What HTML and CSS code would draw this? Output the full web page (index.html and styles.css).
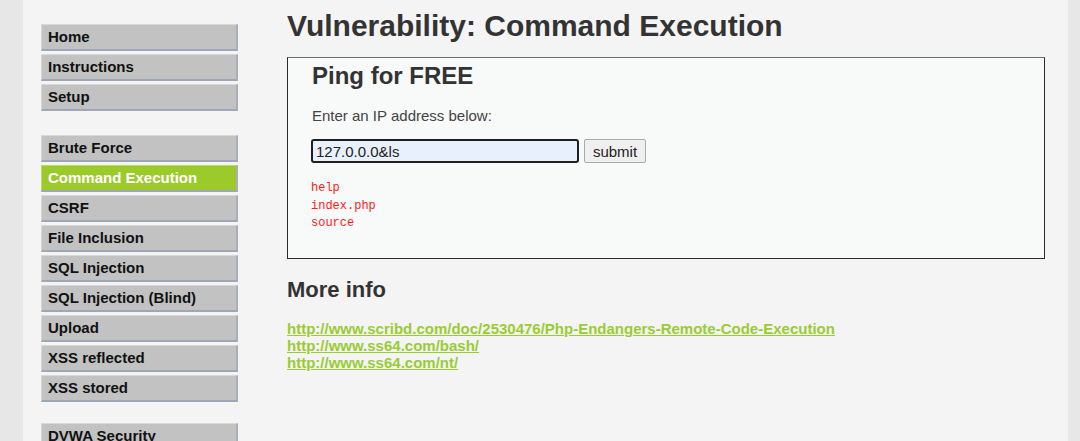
FILE: index.html
```html
<!DOCTYPE html>
<html>
<head>
<meta charset="utf-8">
<link rel="stylesheet" href="styles.css">
</head>
<body>
<div class="page">
  <nav class="menu">
    <ul class="group">
      <li><a class="item">Home</a></li>
      <li><a class="item">Instructions</a></li>
      <li><a class="item">Setup</a></li>
    </ul>
    <ul class="group">
      <li><a class="item">Brute Force</a></li>
      <li><a class="item selected">Command Execution</a></li>
      <li><a class="item">CSRF</a></li>
      <li><a class="item">File Inclusion</a></li>
      <li><a class="item">SQL Injection</a></li>
      <li><a class="item">SQL Injection (Blind)</a></li>
      <li><a class="item">Upload</a></li>
      <li><a class="item">XSS reflected</a></li>
      <li><a class="item">XSS stored</a></li>
    </ul>
    <ul class="group">
      <li><a class="item">DVWA Security</a></li>
    </ul>
  </nav>
  <main class="body">
    <h1 class="title">Vulnerability: Command Execution</h1>
    <div class="vulnerable">
      <h2 class="sub">Ping for FREE</h2>
      <p class="label">Enter an IP address below:</p>
      <form class="form">
        <input class="ip" type="text" value="127.0.0.0&amp;ls">
        <button class="btn" type="button">submit</button>
      </form>
      <pre class="output">help
index.php
source</pre>
    </div>
    <h2 class="more">More info</h2>
    <ul class="links">
      <li><a class="link">http://www.scribd.com/doc/2530476/Php-Endangers-Remote-Code-Execution</a></li>
      <li><a class="link">http://www.ss64.com/bash/</a></li>
      <li><a class="link">http://www.ss64.com/nt/</a></li>
    </ul>
  </main>
</div>
</body>
</html>
```
FILE: styles.css
```css
html, body {
  margin: 0;
  padding: 0;
  height: 100%;
  overflow: hidden;
}
body {
  background: #e7e7e7;
  font-family: "Liberation Sans", Arial, sans-serif;
  color: #333;
}
.page {
  margin-left: 23px;
  width: 1045px;
  height: 100%;
  background: #f4f4f4;
  display: flex;
}
.menu {
  width: 197px;
  padding: 24px 0 0 18px;
  flex: none;
}
.group {
  list-style: none;
  margin: 0 0 21px 0;
  padding: 0;
}
.group li {
  margin-bottom: 3px;
}
.group:first-child {
  margin-bottom: 24px;
}
.item {
  display: block;
  box-sizing: border-box;
  height: 27px;
  line-height: 24px;
  padding-left: 6px;
  background: #c2c2c2;
  border-top: 1px solid #d8d8d8;
  border-left: 1px solid #d8d8d8;
  border-right: 2px solid #a9afb9;
  border-bottom: 2px solid #9ea7b7;
  font-size: 15px;
  font-weight: bold;
  color: #111;
}
.item.selected {
  background: #9cca2a;
  color: #fff;
  border-top-color: #b9dc66;
  border-left-color: #b9dc66;
}
.body {
  margin-left: 49px;
  width: 758px;
  flex: none;
}
.title {
  margin: 8px 0 0 0;
  font-size: 30px;
  line-height: 36px;
  font-weight: bold;
  color: #333;
}
.vulnerable {
  margin-top: 13px;
  box-sizing: border-box;
  height: 202px;
  background: #f8f9f9;
  border: 1px solid #2a2a2a;
  border-top-color: #6e6e6e;
  padding: 3px 24px 0 24px;
}
.sub {
  margin: 0;
  font-size: 24px;
  line-height: 30px;
  font-weight: bold;
  color: #333;
}
.label {
  margin: 16px 0 0 0;
  font-size: 15px;
  line-height: 18px;
  color: #444;
}
.form {
  margin-top: 14px;
  display: flex;
  gap: 5px;
  align-items: center;
}
.ip {
  box-sizing: border-box;
  width: 268px;
  height: 24px;
  margin: 0 0 0 -1px;
  border: 2px solid #1f1f1f;
  border-radius: 3px;
  background: #e8f0fe;
  font-family: "Liberation Sans", Arial, sans-serif;
  font-size: 15px;
  color: #222;
  padding: 0 3px;
  outline: none;
}
.btn {
  box-sizing: border-box;
  width: 62px;
  height: 24px;
  border: 1px solid #a9a9a9;
  border-radius: 2px;
  background: #efefef;
  font-family: "Liberation Sans", Arial, sans-serif;
  font-size: 15px;
  color: #222;
  padding: 0;
}
.output {
  margin: 17px 0 0 -1px;
  font-family: "Liberation Mono", "Courier New", monospace;
  font-size: 12px;
  line-height: 17.5px;
  color: #ff1a1a;
}
.more {
  margin: 16px 0 0 0;
  font-size: 22px;
  line-height: 30px;
  font-weight: bold;
  color: #333;
}
.links {
  list-style: none;
  margin: 15px 0 0 0;
  padding: 0;
  line-height: 17px;
}
.link {
  font-size: 15px;
  line-height: 17px;
  font-weight: bold;
  color: #99cc33;
  text-decoration: underline;
}
```
